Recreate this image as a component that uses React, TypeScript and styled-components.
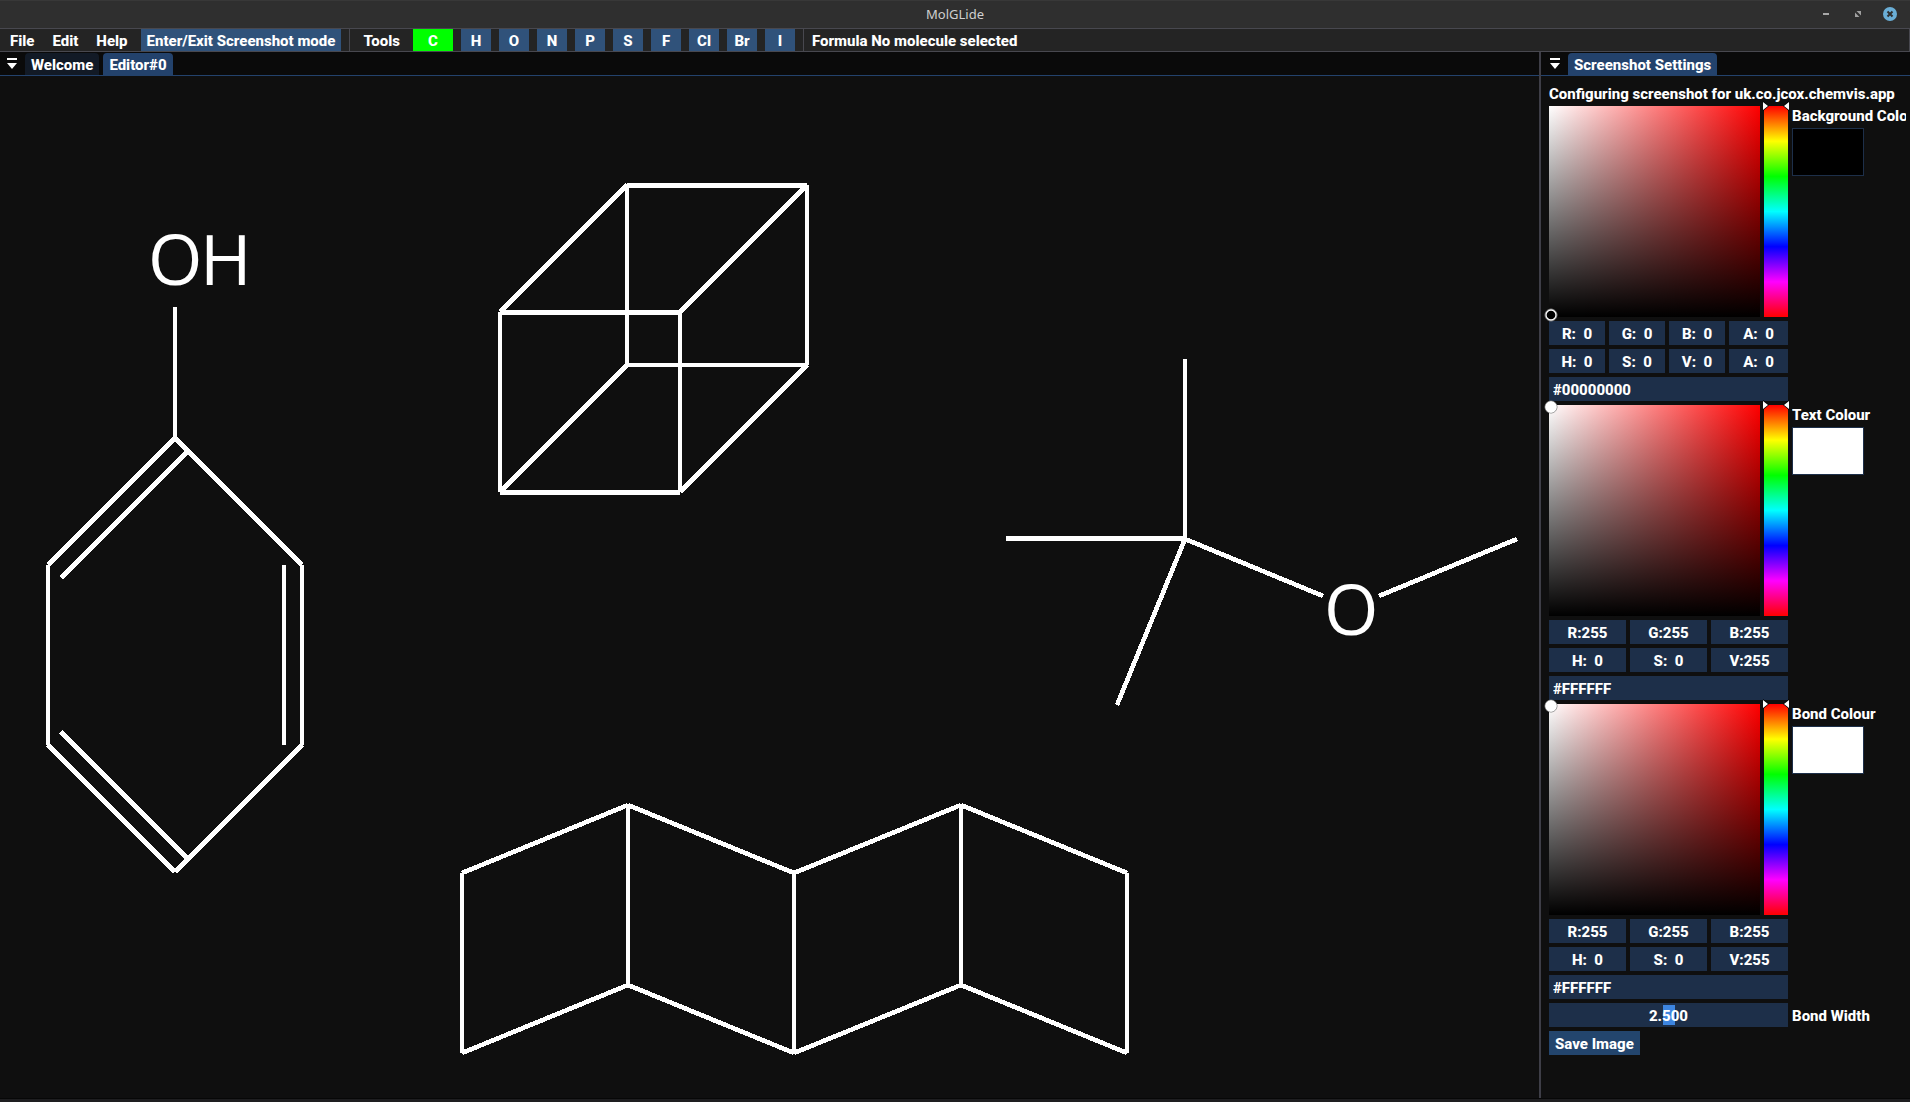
import React, { useState } from "react";
import styled, { createGlobalStyle } from "styled-components";

const color = {
  window: "#0f0f0f",
  strip: "#0a0a0a",
  menu: "#242424",
  border: "#48484f",
  frame: "#1d2f49",
  button: "#23456d",
  menuButton: "#30527a",
  tab: "#23426c",
  tabIdle: "#121a26",
  grab: "#3d85e0",
  text: "#ffffff",
};

const GlobalStyle = createGlobalStyle`
  *, *::before, *::after { box-sizing: border-box; }
  body {
    margin: 0;
    background: ${color.window};
    color: ${color.text};
    font: 800 15px/18px Roboto, "Liberation Sans", sans-serif;
  }
  button, input { font: inherit; color: inherit; border: 0; border-radius: 0; margin: 0; padding: 0; background: none; }
  button { cursor: pointer; white-space: nowrap; }
`;

const Shell = styled.div`
  display: flex;
  flex-direction: column;
  min-height: 100vh;
`;

const TitleBar = styled.header`
  display: grid;
  grid-template-columns: 1fr auto 1fr;
  align-items: center;
  height: 28px;
  background: #2f2f2f;
  box-shadow: inset 0 1px #383838;
`;

const WindowTitle = styled.h1`
  grid-column: 2;
  margin: 0;
  font: 400 13px/18px "Noto Sans", sans-serif;
  color: #d0d0d0;
`;

const WindowButtons = styled.div`
  display: flex;
  justify-content: flex-end;
  gap: 16px;
  padding-right: 12px;
`;

const WindowButton = styled.button`
  display: flex;
  width: 16px;
  height: 16px;
`;

const MenuBar = styled.nav`
  display: flex;
  align-items: stretch;
  height: 24px;
  padding-left: 1px;
  background: ${color.menu};
  border: 1px solid ${color.border};
  border-left: 0;
`;

const MenuItem = styled.button`
  padding: 2px 9px 0;
`;

const ScreenshotToggle = styled.button`
  margin: 0 8px 0 4px;
  padding: 2px 6px 0;
  background: ${color.menuButton};
`;

const Separator = styled.span`
  width: 1px;
  background: ${color.border};
`;

const ToolsLabel = styled.span`
  display: flex;
  align-items: center;
  padding: 2px 13px 0;
`;

const Elements = styled.div`
  display: flex;
  gap: 8px;
  margin-right: 8px;
`;

const ElementButton = styled.button<{ $active: boolean }>`
  width: ${(p) => (p.$active ? 40 : 30)}px;
  padding-top: 2px;
  background: ${(p) => (p.$active ? "#00ff00" : color.menuButton)};
`;

const Formula = styled.span`
  display: flex;
  align-items: center;
  padding: 2px 8px 0;
`;

const Docks = styled.main`
  flex: 1;
  display: grid;
  grid-template-columns: minmax(0, 1fr) 371px;
`;

const Dock = styled.section`
  display: flex;
  flex-direction: column;
  min-width: 0;
`;

const SideDock = styled(Dock)`
  border-left: 2px solid #3e3e47;
`;

const TabStrip = styled.div<{ $inset: number }>`
  display: flex;
  align-items: flex-end;
  gap: 4px;
  height: 24px;
  padding-left: ${(p) => p.$inset}px;
  background: ${color.strip};
  border-bottom: 1px solid ${color.tab};
`;

const TabList = styled.button`
  display: flex;
  align-items: center;
  padding-left: 2px;
  width: 17px;
  height: 22px;
`;

const Tab = styled.button<{ $active: boolean }>`
  height: 22px;
  padding: 2px 6px 0;
  border-radius: 4px 4px 0 0;
  background: ${(p) => (p.$active ? color.tab : color.tabIdle)};
`;

const Canvas = styled.svg`
  flex: 1;
  width: 100%;
  min-height: 0;
  display: block;
`;

const AtomLabel = styled.text`
  font: 400 70px "Open Sans", "Noto Sans", sans-serif;
  fill: #ffffff;
`;

const Settings = styled.div`
  display: flex;
  flex-direction: column;
  gap: 4px;
  margin-right: 4px;
  padding: 8px 0 8px 8px;
  overflow: hidden;
  white-space: nowrap;
`;

const Note = styled.p`
  margin: 0;
  height: 18px;
  line-height: 20px;
`;

const SettingRow = styled.div`
  display: grid;
  grid-template-columns: 239px minmax(0, 1fr);
  column-gap: 4px;
`;

const SettingLabel = styled.span`
  height: 18px;
  line-height: 20px;
`;

const SliderRow = styled(SettingRow)`
  align-items: center;
`;

const Picker = styled.div`
  display: flex;
  flex-direction: column;
  gap: 4px;
`;

const Pads = styled.div`
  display: flex;
  gap: 4px;
  height: 211px;
`;

const ShadePad = styled.div<{ $hue: number }>`
  position: relative;
  flex: 1;
  background: linear-gradient(to top, #000, transparent),
    linear-gradient(to right, #fff, ${(p) => `hsl(${p.$hue} 100% 50%)`});
`;

const ShadeMarker = styled.svg<{ $bottom: boolean }>`
  position: absolute;
  left: -5px;
  ${(p) => (p.$bottom ? "bottom: -5px;" : "top: -5px;")}
`;

const HueTrack = styled.div`
  position: relative;
  width: 24px;
`;

const HueInput = styled.input`
  appearance: none;
  display: block;
  width: 24px;
  height: 211px;
  writing-mode: vertical-lr;
  background: linear-gradient(#f00, #ff0, #0f0, #0ff, #00f, #f0f, #f00);
  &::-webkit-slider-thumb {
    appearance: none;
    width: 24px;
    height: 1px;
    background: transparent;
  }
`;

const HueArrows = styled.svg`
  position: absolute;
  left: -2px;
  pointer-events: none;
`;

const FieldRow = styled.div<{ $count: number }>`
  display: grid;
  grid-template-columns: repeat(${(p) => p.$count - 1}, ${(p) => (p.$count === 4 ? 56 : 77)}px) 1fr;
  gap: 4px;
`;

const Field = styled.input`
  min-width: 0;
  width: 100%;
  height: 24px;
  padding: 2px 4px 0;
  text-align: center;
  background: ${color.frame};
`;

const HexField = styled(Field)`
  text-align: left;
`;

const Preview = styled.div`
  display: flex;
  flex-direction: column;
  align-items: flex-start;
  gap: 4px;
  overflow: hidden;
`;

const Swatch = styled.button<{ $fill: string }>`
  width: 72px;
  height: 48px;
  border: 1px solid ${color.frame};
  background: ${(p) => p.$fill};
`;

const WidthSlider = styled.div`
  position: relative;
  height: 24px;
`;

const WidthInput = styled.input`
  appearance: none;
  display: block;
  width: 100%;
  height: 24px;
  padding: 0 2px;
  background: ${color.frame};
  &::-webkit-slider-thumb {
    appearance: none;
    width: 12px;
    height: 20px;
    background: ${color.grab};
  }
`;

const WidthValue = styled.output`
  position: absolute;
  inset: 0;
  display: flex;
  align-items: center;
  justify-content: center;
  padding-top: 2px;
  pointer-events: none;
`;

const WidthLabel = styled.label`
  padding-top: 2px;
`;

const SaveButton = styled.button`
  align-self: flex-start;
  height: 24px;
  padding: 2px 6px 0;
  background: ${color.button};
`;

const BottomEdge = styled.footer`
  height: 4px;
  background: #1e1e20;
  border-top: 1px solid #070707;
`;

const ELEMENTS = ["C", "H", "O", "N", "P", "S", "F", "Cl", "Br", "I"];

type Bond = [number, number, number, number, number?];

/* Bond end points in canvas pixels; the fifth number is a stroke width. */
const BONDS: Bond[] = [
  // phenol
  [175, 231, 175, 363],
  [175, 362, 48, 489],
  [187, 376, 61, 502],
  [175, 362, 302, 489],
  [48, 489, 48, 669],
  [302, 489, 302, 669],
  [284, 489, 284, 669],
  [48, 669, 175, 796],
  [61, 656, 187, 782],
  [302, 669, 175, 796],
  // cubane
  [627, 109.5, 807, 109.5, 5],
  [627, 289, 807, 289],
  [627, 109, 627, 289],
  [807, 109, 807, 289],
  [500, 236.5, 680, 236.5, 5],
  [500, 416.5, 680, 416.5, 5],
  [500, 236, 500, 416],
  [680, 236, 680, 416],
  [500, 236, 627, 109],
  [680, 236, 807, 109],
  [500, 416, 627, 289],
  [680, 416, 807, 289],
  // tert-butyl methyl ether
  [1185, 283, 1185, 463],
  [1006, 462.5, 1185, 462.5, 5],
  [1185, 463, 1117, 629],
  [1185, 463, 1323, 520],
  [1379, 520, 1517, 463],
  // fused ladder
  [462, 797, 628, 729],
  [628, 729, 794, 797],
  [794, 797, 961, 729],
  [961, 729, 1127, 797],
  [462, 977, 628, 909],
  [628, 909, 794, 977],
  [794, 977, 961, 909],
  [961, 909, 1127, 977],
  [462, 797, 462, 977],
  [628, 729, 628, 909],
  [794, 797, 794, 977],
  [961, 729, 961, 909],
  [1127, 797, 1127, 977],
];

function bondWidthFor([x1, y1, x2, y2, width]: Bond) {
  return width ?? (x1 === x2 || y1 === y2 ? 4 : 4.6);
}

function ListIcon() {
  return (
    <svg width="12" height="14" viewBox="0 0 12 14" aria-hidden="true">
      <path d="M1 1H11V3H1Z M1 6H11L6 12Z" fill="#fff" />
    </svg>
  );
}

function Molecules() {
  return (
    <Canvas role="img" aria-label="Molecule editor">
      <g stroke="#fff" shapeRendering="crispEdges">
        {BONDS.map((bond, i) => (
          <line key={i} x1={bond[0]} y1={bond[1]} x2={bond[2]} y2={bond[3]} strokeWidth={bondWidthFor(bond)} />
        ))}
      </g>
      <AtomLabel x="148 200" y="209">OH</AtomLabel>
      <AtomLabel x="1324" y="559">O</AtomLabel>
    </Canvas>
  );
}

interface PickerProps {
  label: string;
  fill: string;
  hex: string;
  rows: string[][];
}

function ColourSetting({ label, fill, hex, rows }: PickerProps) {
  const [hue, setHue] = useState(0);
  const dark = fill === "#000000";
  return (
    <SettingRow role="group" aria-label={label}>
      <Picker>
        <Pads>
          <ShadePad $hue={hue}>
            <ShadeMarker $bottom={dark} width="14" height="14" viewBox="0 0 14 14" aria-hidden="true">
              <circle cx="7" cy="7" r="6" fill={fill} stroke="#808080" />
              <circle cx="7" cy="7" r="5" fill="none" stroke="#fff" strokeWidth="1.3" />
            </ShadeMarker>
          </ShadePad>
          <HueTrack>
            <HueInput
              type="range"
              min={0}
              max={360}
              value={hue}
              onChange={(e) => setHue(Number(e.target.value))}
              aria-label={`${label} hue`}
            />
            <HueArrows
              width="28"
              height="12"
              viewBox="0 0 28 12"
              style={{ top: Math.round((hue / 360) * 211) - 6 }}
              aria-hidden="true"
            >
              <path d="M1 1V11L7 6Z M27 1V11L21 6Z" fill="#000" />
              <path d="M1 2V10L6 6Z M27 2V10L22 6Z" fill="#fff" />
            </HueArrows>
          </HueTrack>
        </Pads>
        {rows.map((row, r) => (
          <FieldRow key={r} $count={row.length}>
            {row.map((value, i) => (
              <Field key={i} defaultValue={value} aria-label={`${label} ${value.slice(0, 1)}`} />
            ))}
          </FieldRow>
        ))}
        <HexField defaultValue={hex} aria-label={`${label} hex`} />
      </Picker>
      <Preview>
        <SettingLabel>{label}</SettingLabel>
        <Swatch $fill={fill} aria-label={`${label} preview`} />
      </Preview>
    </SettingRow>
  );
}

const WHITE_ROWS = [
  ["R:255", "G:255", "B:255"],
  ["H:  0", "S:  0", "V:255"],
];

export default function App() {
  const [element, setElement] = useState("C");
  const [bondWidth, setBondWidth] = useState(2.5);

  return (
    <Shell>
      <GlobalStyle />
      <TitleBar>
        <WindowTitle>MolGLide</WindowTitle>
        <WindowButtons>
          <WindowButton aria-label="Minimise">
            <svg width="16" height="16" viewBox="0 0 16 16">
              <path d="M5 7H11V9H5Z" fill="#a8a8a8" />
            </svg>
          </WindowButton>
          <WindowButton aria-label="Restore">
            <svg width="16" height="16" viewBox="0 0 16 16">
              <path d="M6.5 5H11V9.5Z M5 6.5V11H9.5Z" fill="#a0a0a0" />
            </svg>
          </WindowButton>
          <WindowButton aria-label="Close">
            <svg width="16" height="16" viewBox="0 0 16 16">
              <circle cx="8" cy="8" r="7" fill="#6aaed6" />
              <path d="M5.5 5.5L10.5 10.5M10.5 5.5L5.5 10.5" stroke="#2f2f2f" strokeWidth="2" />
            </svg>
          </WindowButton>
        </WindowButtons>
      </TitleBar>

      <MenuBar>
        <MenuItem>File</MenuItem>
        <MenuItem>Edit</MenuItem>
        <MenuItem>Help</MenuItem>
        <ScreenshotToggle>Enter/Exit Screenshot mode</ScreenshotToggle>
        <Separator />
        <ToolsLabel>Tools</ToolsLabel>
        <Elements>
          {ELEMENTS.map((symbol) => (
            <ElementButton key={symbol} $active={symbol === element} onClick={() => setElement(symbol)}>
              {symbol}
            </ElementButton>
          ))}
        </Elements>
        <Separator />
        <Formula>Formula No molecule selected</Formula>
      </MenuBar>

      <Docks>
        <Dock>
          <TabStrip $inset={4}>
            <TabList aria-label="Editor tabs">
              <ListIcon />
            </TabList>
            <Tab $active={false}>Welcome</Tab>
            <Tab $active>Editor#0</Tab>
          </TabStrip>
          <Molecules />
        </Dock>
        <SideDock>
          <TabStrip $inset={6}>
            <TabList aria-label="Settings tabs">
              <ListIcon />
            </TabList>
            <Tab $active>Screenshot Settings</Tab>
          </TabStrip>
          <Settings>
            <Note>Configuring screenshot for uk.co.jcox.chemvis.app</Note>
            <ColourSetting
              label="Background Colour"
              fill="#000000"
              hex="#00000000"
              rows={[
                ["R:  0", "G:  0", "B:  0", "A:  0"],
                ["H:  0", "S:  0", "V:  0", "A:  0"],
              ]}
            />
            <ColourSetting label="Text Colour" fill="#ffffff" hex="#FFFFFF" rows={WHITE_ROWS} />
            <ColourSetting label="Bond Colour" fill="#ffffff" hex="#FFFFFF" rows={WHITE_ROWS} />
            <SliderRow>
              <WidthSlider>
                <WidthInput
                  id="bond-width"
                  type="range"
                  min={0}
                  max={5}
                  step={0.1}
                  value={bondWidth}
                  onChange={(e) => setBondWidth(Number(e.target.value))}
                />
                <WidthValue htmlFor="bond-width">{bondWidth.toFixed(3)}</WidthValue>
              </WidthSlider>
              <WidthLabel htmlFor="bond-width">Bond Width</WidthLabel>
            </SliderRow>
            <SaveButton>Save Image</SaveButton>
          </Settings>
        </SideDock>
      </Docks>
      <BottomEdge />
    </Shell>
  );
}
